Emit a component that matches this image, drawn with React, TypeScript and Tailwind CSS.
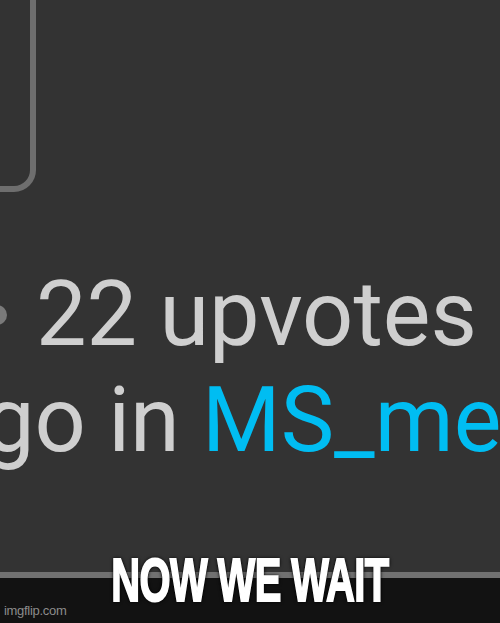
const App = () => {
  return <div className="relative w-[500px] h-[623px] overflow-hidden bg-[#333333] flex flex-col" style={{ fontFamily: 'Roboto, "Noto Sans", sans-serif' }}>
      {/* screenshot area */}
      <div className="h-[572px] overflow-hidden flex flex-col">
        {/* card edge, mostly off-screen */}
        <div className="-mt-[40px] -ml-[40px] w-[76px] h-[232px] shrink-0 border-[6px] border-[#6e6e6e] rounded-[22px]"></div>
        <div className="mt-[70px] text-[90px] leading-[106px] text-[#cfcfcf] whitespace-nowrap">
          <div className="flex items-center">
            <span className="-ml-[13px] w-[20px] h-[20px] rounded-full bg-[#7a7a7a] shrink-0"></span>
            <span className="ml-[29px]">22 upvotes</span>
          </div>
          <div className="-ml-[16px]">
            go in <span className="text-[#00bdf2]">MS_me</span>
          </div>
        </div>
      </div>
      <div className="h-[6px] bg-[#717171] shrink-0"></div>
      <div className="flex-1 bg-[#121212] flex items-end px-[4px] pb-[3px]">
        <span className="text-[13px] text-[#8c8c8c] tracking-[-0.3px]" style={{ fontFamily: '"Liberation Sans", Arial, sans-serif' }}>imgflip.com</span>
      </div>
      {/* meme caption */}
      <div className="absolute left-0 right-0 top-[549px] flex justify-center">
        <span className="text-[62px] leading-[62px] font-bold text-white scale-x-[0.645] tracking-[-1px] [-webkit-text-stroke:2px_white] [text-shadow:0_0_5px_#000,0_0_3px_#000,0_0_2px_#000]" style={{ fontFamily: '"Liberation Sans", Arial, sans-serif' }}>
          NOW WE WAIT
        </span>
      </div>
    </div>;
};
export default App;
